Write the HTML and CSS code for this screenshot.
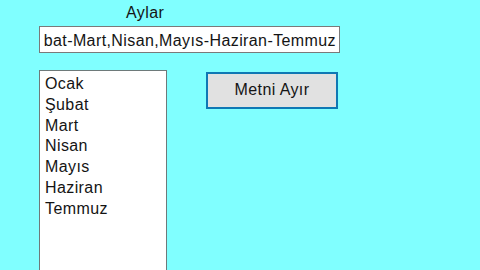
FILE: index.html
```html
<!DOCTYPE html>
<html lang="tr">
<head>
<meta charset="utf-8">
<title>Aylar</title>
<link rel="stylesheet" href="styles.css">
</head>
<body>
<div class="page">
  <div class="label">Aylar</div>
  <div class="input"><span class="input-text">bat-Mart,Nisan,Mayıs-Haziran-Temmuz</span></div>
  <div class="row">
    <div class="list">
      <div class="item">Ocak</div>
      <div class="item">Şubat</div>
      <div class="item">Mart</div>
      <div class="item">Nisan</div>
      <div class="item">Mayıs</div>
      <div class="item">Haziran</div>
      <div class="item">Temmuz</div>
    </div>
    <div class="button">Metni Ayır</div>
  </div>
</div>
</body>
</html>
```
FILE: styles.css
```css
html, body {
  margin: 0;
  padding: 0;
  background: #80ffff;
  width: 480px;
  height: 270px;
  overflow: hidden;
}
.page {
  padding: 4px 0 0 39px;
  font-family: "Liberation Sans", Arial, sans-serif;
  font-size: 16px;
  letter-spacing: 0.4px;
  color: #141414;
}
.label {
  margin-left: 87px;
  line-height: 18px;
  height: 18px;
}
.input {
  margin-top: 4px;
  width: 296px;
  height: 25px;
  border: 1px solid #7a7a7a;
  background: #fff;
  display: flex;
  justify-content: flex-end;
  overflow: hidden;
  box-sizing: content-box;
  padding-right: 3px;
}
.input-text {
  white-space: nowrap;
  flex: none;
  line-height: 23px;
  padding-top: 2px;
}
.row {
  display: flex;
  align-items: flex-start;
  margin-top: 17px;
}
.list {
  width: 128px;
  height: 210px;
  border: 1px solid #6e7a7a;
  border-bottom: none;
  background: #fff;
  padding: 3px 0 0 5px;
  box-sizing: border-box;
}
.item {
  line-height: 20.8px;
}
.button {
  margin-left: 39px;
  margin-top: 2px;
  width: 132px;
  height: 37px;
  box-sizing: border-box;
  border: 2px solid #0f78b4;
  background: #e1e1e1;
  display: flex;
  align-items: center;
  justify-content: center;
  padding-bottom: 2px;
}
```
